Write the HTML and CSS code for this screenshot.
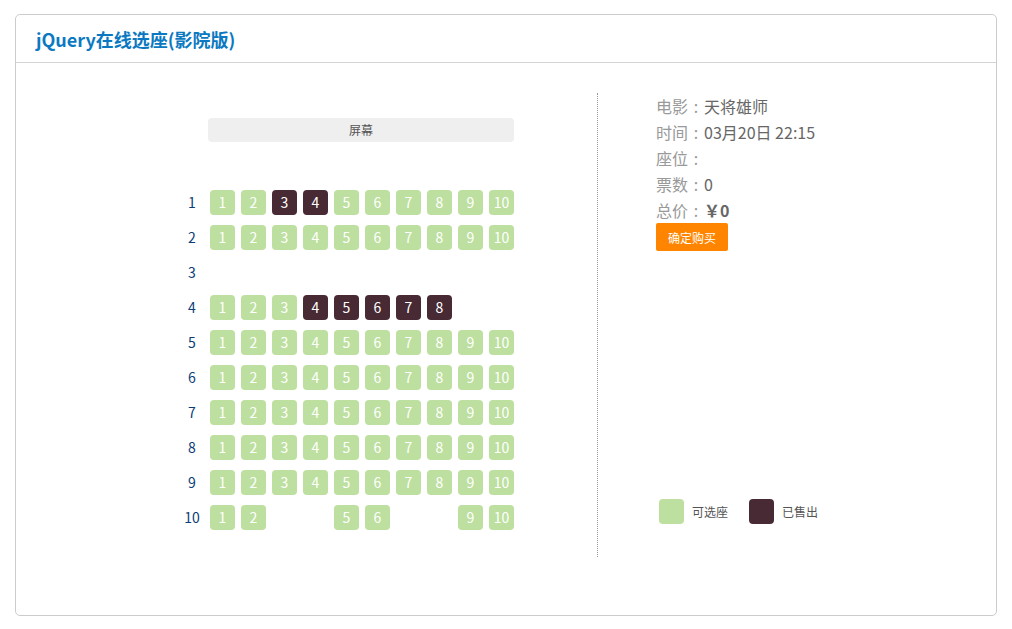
FILE: index.html
```html
<!DOCTYPE html>
<html lang="zh-CN">
<head>
    <meta charset="UTF-8">
    <meta name="viewport" content="width=device-width, initial-scale=1.0">
    <title>jQuery在线选座(影院版)</title>
    <link rel="stylesheet" href="styles.css">
</head>
<body>
    <div class="panel">
        <div class="panel-head">
            <h2>jQuery在线选座(影院版)</h2>
        </div>
        <div class="panel-body">
            <div class="seat-area">
                <div class="screen">屏幕</div>
                <div class="seat-map" id="seatMap"></div>
            </div>
            <div class="booking">
                <p><span class="label">电影<i>:</i></span>天将雄师</p>
                <p><span class="label">时间<i>:</i></span>03月20日 22:15</p>
                <p><span class="label">座位<i>:</i></span></p>
                <p><span class="label">票数<i>:</i></span>0</p>
                <p><span class="label">总价<i>:</i></span><b class="price">￥0</b></p>
                <button class="buy">确定购买</button>
                <div class="legend">
                    <span class="seat"></span><span class="legend-text">可选座</span>
                    <span class="seat sold"></span><span class="legend-text">已售出</span>
                </div>
            </div>
        </div>
    </div>

    <script>
        // a = available, s = sold, _ = no seat
        var rows = [
            'aassaaaaaa',
            'aaaaaaaaaa',
            '__________',
            'aaasssss__',
            'aaaaaaaaaa',
            'aaaaaaaaaa',
            'aaaaaaaaaa',
            'aaaaaaaaaa',
            'aaaaaaaaaa',
            'aa__aa__aa'
        ];
        var map = document.getElementById('seatMap');
        rows.forEach(function (row, r) {
            var line = document.createElement('div');
            line.className = 'seat-row';
            var num = document.createElement('span');
            num.className = 'row-num';
            num.textContent = r + 1;
            line.appendChild(num);
            for (var c = 0; c < row.length; c++) {
                var seat = document.createElement('span');
                if (row[c] === '_') {
                    seat.className = 'seat empty';
                } else {
                    seat.className = row[c] === 's' ? 'seat sold' : 'seat';
                    seat.textContent = c + 1;
                }
                line.appendChild(seat);
            }
            map.appendChild(line);
        });
    </script>
</body>
</html>
```

FILE: styles.css
```css
body {
    font-family: "Noto Sans CJK SC", "Noto Sans", sans-serif;
    margin: 0;
    padding: 14px 15px;
    background: #fff;
}
.panel {
    width: 980px;
    border: 1px solid #ccc;
    border-radius: 5px;
}
.panel-head {
    height: 47px;
    border-bottom: 1px solid #d4d4d4;
    padding-left: 20px;
    display: flex;
    align-items: center;
}
.panel-head h2 {
    margin: 0;
    font-size: 18px;
    font-weight: bold;
    color: #0b79c1;
}
.panel-body {
    display: flex;
    padding: 30px 0 58px;
}
.seat-area {
    width: 582px;
    height: 464px;
    border-right: 1px dotted #999;
    padding-left: 164px;
    box-sizing: border-box;
}
.screen {
    width: 306px;
    height: 24px;
    margin: 25px 0 0 28px;
    background: #efefef;
    border-radius: 4px;
    font-size: 12px;
    color: #555;
    text-align: center;
    line-height: 24px;
}
.seat-map {
    margin-top: 48px;
}
.seat-row {
    display: flex;
    gap: 6px;
    height: 25px;
    margin-bottom: 10px;
}
.row-num {
    width: 24px;
    font-size: 14px;
    line-height: 25px;
    text-align: center;
    color: #0c3d78;
}
.seat {
    width: 25px;
    height: 25px;
    border-radius: 4px;
    background: #bddf9f;
    color: #fff;
    font-size: 14px;
    line-height: 25px;
    text-align: center;
}
.seat.sold {
    background: #472a34;
}
.seat.empty {
    background: none;
}
.booking {
    padding-left: 58px;
    display: flex;
    flex-direction: column;
    align-items: flex-start;
}
.booking p {
    margin: 0;
    font-size: 16px;
    line-height: 26px;
    color: #666;
}
.label {
    color: #999;
}
.label i {
    display: inline-block;
    width: 16px;
    text-align: center;
    font-style: normal;
}
.price {
    color: #666;
}
.buy {
    width: 72px;
    height: 28px;
    border: none;
    border-radius: 2px;
    background: #ff8500;
    color: #fff;
    font-family: inherit;
    font-size: 12px;
    padding: 0;
    cursor: pointer;
}
.legend {
    display: flex;
    align-items: center;
    margin: 248px 0 0 3px;
}
.legend-text {
    font-size: 12px;
    color: #555;
    margin: 0 21px 0 8px;
}
```
